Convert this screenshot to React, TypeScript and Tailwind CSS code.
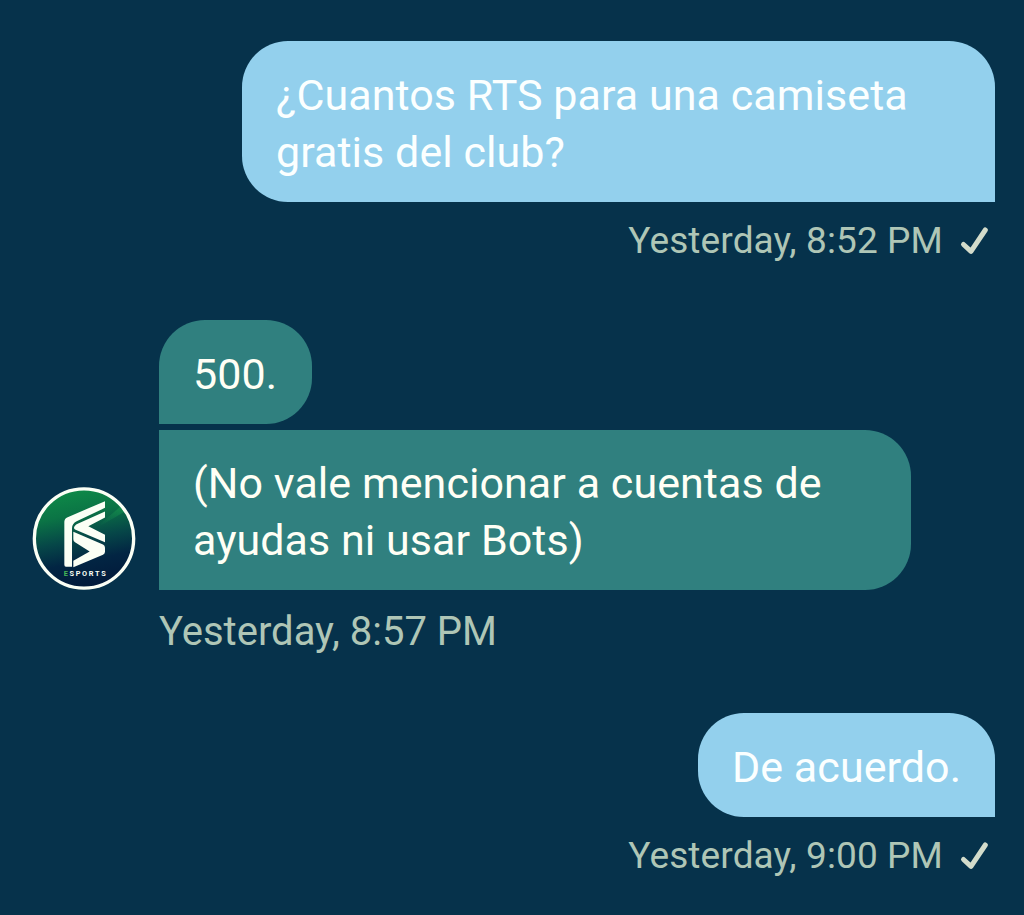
import { ReactNode } from "react";
import clsx from "clsx";

interface BubbleProps {
  className?: string;
  children: ReactNode;
}

function SentBubble({ className, children }: BubbleProps) {
  return (
    <div
      className={clsx(
        "rounded-[46px] rounded-br-none bg-[#93d0ed] pt-[26px] pl-[34px] text-[43px] leading-[57px] tracking-[0.06px] text-[#fbffff]",
        className,
      )}
    >
      {children}
    </div>
  );
}

function ReceivedBubble({ className, children }: BubbleProps) {
  return (
    <div
      className={clsx(
        "bg-[#30807f] pl-[34px] text-[43px] leading-[57px] tracking-[0.06px] text-[#fffff5]",
        className,
      )}
    >
      {children}
    </div>
  );
}

function SentTime({ children }: { children: ReactNode }) {
  return (
    <div className="mt-[14px] flex h-12 items-center gap-[17px] pr-[6px]">
      <span className="mt-0.5 -mr-px text-[37px] leading-[48px] tracking-[0.12px] text-[#afc6b6]">
        {children}
      </span>
      <svg
        viewBox="0 0 30 30"
        className="h-[30px] w-[30px]"
        fill="none"
        stroke="#d3dccb"
        strokeWidth="5"
        strokeLinecap="round"
        strokeLinejoin="round"
        aria-hidden="true"
      >
        <path d="M4.5 19.5L12 26.3L26.3 5" />
      </svg>
    </div>
  );
}

function Avatar() {
  return (
    <svg viewBox="24 18.5 312 312" className="h-[104px] w-[104px] shrink-0">
      <defs>
        <linearGradient id="club" x1="0.4" y1="0" x2="0.6" y2="1">
          <stop offset="0" stopColor="#0e8a48" />
          <stop offset="0.25" stopColor="#0b7445" />
          <stop offset="0.5" stopColor="#064748" />
          <stop offset="0.72" stopColor="#022543" />
          <stop offset="1" stopColor="#02193a" />
        </linearGradient>
        <linearGradient id="sheen" x1="0" y1="1" x2="1" y2="0">
          <stop offset="0.2" stopColor="#1ba552" stopOpacity="0" />
          <stop offset="1" stopColor="#1ba552" stopOpacity="0.5" />
        </linearGradient>
      </defs>
      <circle cx="180" cy="176" r="149" fill="url(#club)" />
      <path d="M205 152L292 78L304 94Z" fill="url(#sheen)" />
      <circle
        cx="180"
        cy="176"
        r="149"
        fill="none"
        stroke="#fbfff5"
        strokeWidth="10"
      />
      <g fill="#fbfff5">
        <path d="M243 64V84L158 124Q144 131 144 145V261H126Q121 261 121 255V126Q121 116 131 112Z" />
        <path d="M243 95V113L193 139L243 165V187L153 149Q147 145 153 138Q156 134 161 132Z" />
        <path d="M148 156L237 194Q243 197 243 204V216Q243 222 237 225L148 262V243L197 215L153 187Q148 184 148 178Z" />
      </g>
      <text
        x="119"
        y="288"
        textLength="126"
        className="font-[Roboto] text-[22px] font-bold"
        fill="#fbfff5"
      >
        <tspan fill="#47b957">E</tspan>SPORTS
      </text>
    </svg>
  );
}

export default function App() {
  return (
    <main className="h-[915px] w-[1024px] overflow-hidden bg-[#06324b] pt-[41px] pr-[29px] pl-8 font-[Roboto,sans-serif]">
      <section className="flex h-[279px] flex-col items-end">
        <SentBubble className="h-[161px] w-[753px]">
          ¿Cuantos RTS para una camiseta
          <br />
          gratis del club?
        </SentBubble>
        <SentTime>Yesterday, 8:52 PM</SentTime>
      </section>

      <section className="h-[393px]">
        <div className="flex items-end gap-[23px]">
          <Avatar />
          <div className="flex flex-col gap-[6px]">
            <ReceivedBubble className="h-[104px] w-[153px] rounded-[46px] rounded-bl-none pt-[26px]">
              500.
            </ReceivedBubble>
            <ReceivedBubble className="h-[160px] w-[752px] rounded-r-[46px] pt-[25px]">
              (No vale mencionar a cuentas de
              <br />
              ayudas ni usar Bots)
            </ReceivedBubble>
          </div>
        </div>
        <div className="mt-[18px] ml-[127px] text-[40px] leading-[48px] text-[#afc6b6]">
          Yesterday, 8:57 PM
        </div>
      </section>

      <section className="flex flex-col items-end">
        <SentBubble className="h-[104px] w-[297px]">De acuerdo.</SentBubble>
        <SentTime>Yesterday, 9:00 PM</SentTime>
      </section>
    </main>
  );
}
